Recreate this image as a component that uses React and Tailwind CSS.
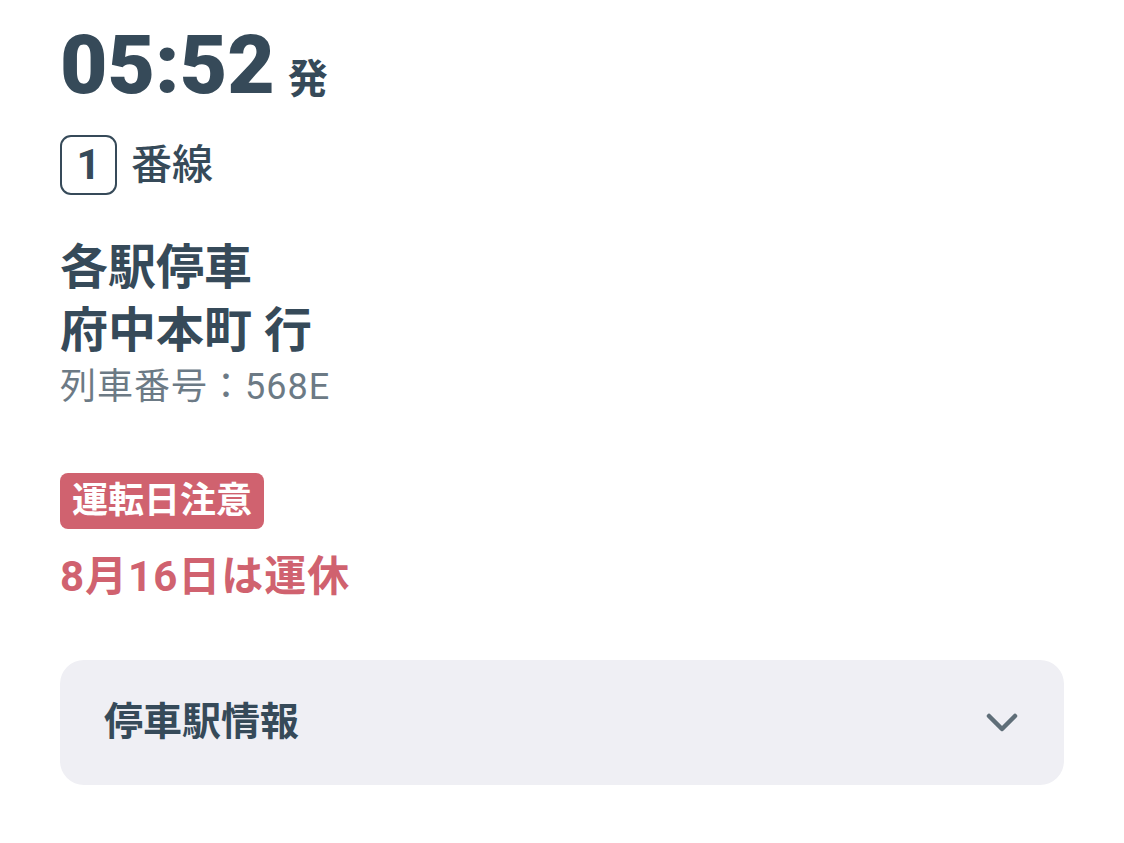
import React from 'react';

const font = { fontFamily: '"Roboto", "Noto Sans CJK JP", sans-serif' };

const TrainDetail = () => {
    return (
        <div className="w-screen h-screen bg-white text-[#364a59] px-[60px] pt-[24px]" style={font}>
            {/* 発車時刻 */}
            <div className="flex items-baseline gap-[13px]">
                <span className="text-[82px] font-black leading-none">05:52</span>
                <span className="text-[40px] font-bold leading-none">発</span>
            </div>

            {/* 番線 */}
            <div className="flex items-center gap-[14px] mt-[29px]">
                <div className="w-[57px] h-[60px] border-[2.5px] border-[#364a59] rounded-[11px] flex items-center justify-center">
                    <span className="text-[42px] font-bold leading-none">1</span>
                </div>
                <span className="text-[41px] font-medium leading-none">番線</span>
            </div>

            {/* 種別・行先 */}
            <div className="mt-[41px]">
                <div className="text-[48px] font-bold leading-[63px]">各駅停車</div>
                <div className="text-[48px] font-bold leading-[63px]">府中本町 行</div>
                <div className="text-[36px] font-normal text-[#6c7a85] leading-[50px] tracking-[1px]">列車番号：568E</div>
            </div>

            {/* 運転日注意 */}
            <div className="mt-[61px]">
                <span className="inline-block bg-[#d0626f] text-white text-[36px] font-bold leading-[56px] px-[12px] rounded-[8px]">
                    運転日注意
                </span>
                <div className="text-[42px] font-bold text-[#d0626f] mt-[27px] leading-none tracking-[1px]">8月16日は運休</div>
            </div>

            {/* 停車駅情報 */}
            <button className="mt-[62px] w-full h-[125px] bg-[#efeff4] rounded-[24px] flex items-center justify-between pl-[44px] pr-[46px]">
                <span className="text-[39px] font-bold">停車駅情報</span>
                <svg width="32" height="20" viewBox="0 0 32 20" fill="none">
                    <path d="M3 3 L16 16 L29 3" stroke="#5f6e78" strokeWidth="4.5" strokeLinecap="round" strokeLinejoin="round" />
                </svg>
            </button>
        </div>
    );
};

export default function App() {
    return <TrainDetail />;
}
